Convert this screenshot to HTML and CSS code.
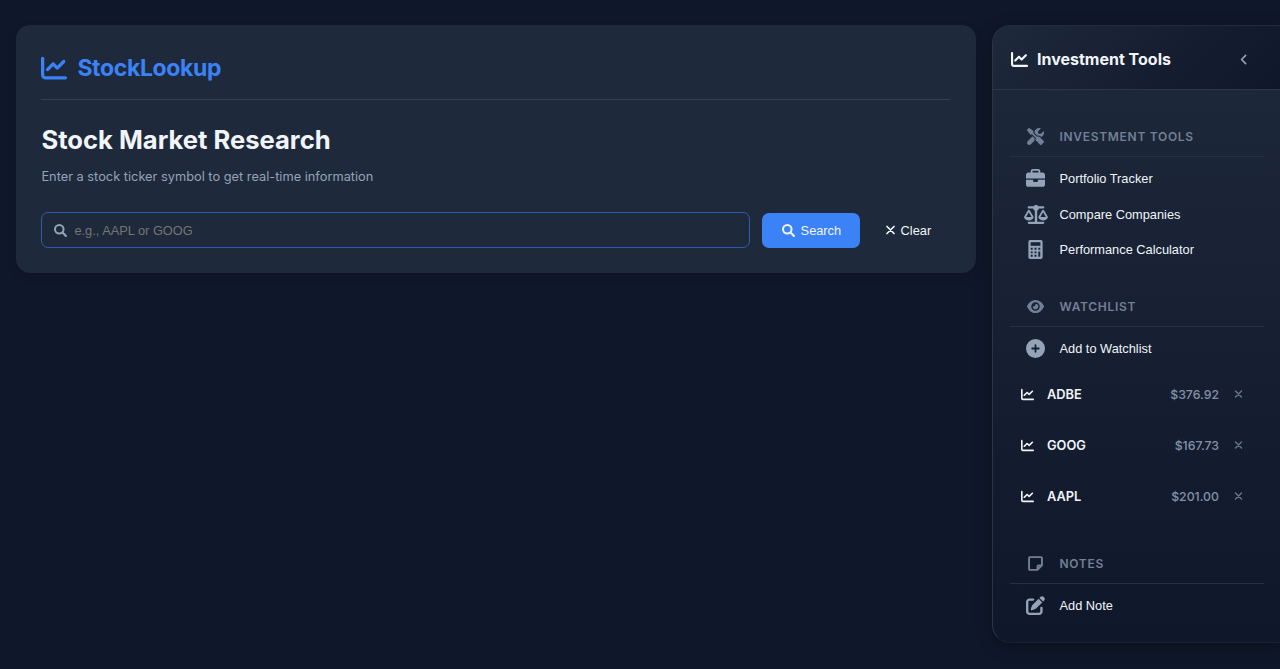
FILE: index.html
```html
<!DOCTYPE html>
<html lang="en">
<head>
<meta charset="utf-8">
<title>StockLookup</title>
<link rel="stylesheet" href="styles.css">
</head>
<body>
<svg class="sprite" aria-hidden="true">
  <symbol id="chart" viewBox="0 0 512 512"><path d="M64 64c0-17.7-14.3-32-32-32S0 46.3 0 64V400c0 44.2 35.8 80 80 80H480c17.7 0 32-14.3 32-32s-14.3-32-32-32H80c-8.8 0-16-7.2-16-16V64zm406.6 86.6c12.5-12.5 12.5-32.8 0-45.3s-32.8-12.5-45.3 0L320 210.7l-57.4-57.4c-12.5-12.5-32.8-12.5-45.3 0l-112 112c-12.5 12.5-12.5 32.8 0 45.3s32.8 12.5 45.3 0L240 221.3l57.4 57.4c12.5 12.5 32.8 12.5 45.3 0l128-128z"/></symbol>
  <symbol id="search" viewBox="0 0 512 512"><circle cx="208" cy="208" r="168" fill="none" stroke="currentColor" stroke-width="80"/><path d="M338 338 468 468" fill="none" stroke="currentColor" stroke-width="84" stroke-linecap="round"/></symbol>
  <symbol id="x" viewBox="0 0 384 512"><path d="M64 128 320 384M320 128 64 384" fill="none" stroke="currentColor" stroke-width="64" stroke-linecap="round"/></symbol>
  <symbol id="left" viewBox="0 0 320 512"><path d="M224 96 64 256 224 416" fill="none" stroke="currentColor" stroke-width="64" stroke-linecap="round" stroke-linejoin="round"/></symbol>
  <symbol id="tools" viewBox="0 0 512 512"><path d="M78.6 5C69.1-2.4 55.6-1.5 47 7L7 47c-8.5 8.5-9.4 22-2.1 31.6l80 104c4.5 5.9 11.6 9.4 19 9.4h54.1l109 109c-14.7 29-10 65.4 14.3 89.6l112 112c12.5 12.5 32.8 12.5 45.3 0l64-64c12.5-12.5 12.5-32.8 0-45.3l-112-112c-24.2-24.2-60.6-29-89.6-14.3l-109-109V104c0-7.5-3.5-14.5-9.4-19L78.6 5zM19.9 396.1C7.2 408.8 0 426.1 0 444.1C0 481.6 30.4 512 67.9 512c18 0 35.3-7.2 48-19.9L233.7 374.3c-7.8-20.9-9-43.6-3.6-65.1l-61.7-61.7L19.9 396.1zM512 144c0-10.5-1.1-20.7-3.2-30.5c-2.4-11.2-16.1-14.1-24.2-6l-63.9 63.9c-3 3-7.1 4.7-11.3 4.7H352c-8.8 0-16-7.2-16-16V102.6c0-4.2 1.7-8.3 4.7-11.3l63.9-63.9c8.1-8.1 5.2-21.8-6-24.2C388.7 1.1 378.5 0 368 0C288.5 0 224 64.5 224 144l0 .8 85.3 85.3c36-9.1 75.8 .5 104 28.7L429 274.5c49-23 83-72.8 83-130.5z"/></symbol>
  <symbol id="briefcase" viewBox="0 0 512 512"><path d="M184 48H328c4.4 0 8 3.6 8 8V96H176V56c0-4.4 3.6-8 8-8zm-56 8V96H64C28.7 96 0 124.7 0 160v96H512V160c0-35.3-28.7-64-64-64H384V56c0-30.9-25.1-56-56-56H184c-30.9 0-56 25.1-56 56zM512 288H320v32c0 17.7-14.3 32-32 32H224c-17.7 0-32-14.3-32-32V288H0V416c0 35.3 28.7 64 64 64H448c35.3 0 64-28.7 64-64V288z"/></symbol>
  <symbol id="scale" viewBox="0 0 640 512"><path d="M384 32H512c17.7 0 32 14.3 32 32s-14.3 32-32 32H398.4c-5.2 25.8-22.9 47.1-46.4 57.3V448H512c17.7 0 32 14.3 32 32s-14.3 32-32 32H128c-17.7 0-32-14.3-32-32s14.3-32 32-32H288V153.3c-23.5-10.3-41.2-31.6-46.4-57.3H128c-17.7 0-32-14.3-32-32s14.3-32 32-32H256c14.6-19.4 37.8-32 64-32s49.4 12.6 64 32zm55.6 288H584.4L512 195.8 439.6 320zM512 416c-62.9 0-115.2-34-126-78.9c-2.6-11 1-22.3 6.7-32.1l95.2-163.2c5-8.6 14.2-13.8 24.1-13.8s19.1 5.3 24.1 13.8l95.2 163.2c5.7 9.8 9.3 21.1 6.7 32.1C627.2 382 574.9 416 512 416zM126.8 195.8L54.4 320H199.3L126.8 195.8zM.9 337.1c-2.6-11 1-22.3 6.7-32.1l95.2-163.2c5-8.6 14.2-13.8 24.1-13.8s19.1 5.3 24.1 13.8l95.2 163.2c5.7 9.8 9.3 21.1 6.7 32.1C242 382 189.7 416 126.8 416S11.7 382 .9 337.1z"/></symbol>
  <symbol id="calc" viewBox="0 0 384 512"><path fill-rule="evenodd" d="M48 0H336a48 48 0 0 1 48 48V464a48 48 0 0 1-48 48H48a48 48 0 0 1-48-48V48A48 48 0 0 1 48 0zM60 62V154H324V62zM64 212V264H116V212zM166 212V264H218V212zM268 212V264H320V212zM64 308V360H116V308zM166 308V360H218V308zM268 308V452H320V308zM64 400V452H116V400zM166 400V452H218V400z"/></symbol>
  <symbol id="eye" viewBox="0 0 576 512"><path d="M288 32c-80.8 0-145.5 36.8-192.6 80.6C48.6 156 17.3 208 2.5 243.7c-3.3 7.9-3.3 16.7 0 24.6C17.3 304 48.6 356 95.4 399.4C142.5 443.2 207.2 480 288 480s145.5-36.8 192.6-80.6c46.8-43.5 78.1-95.4 93-131.1c3.3-7.9 3.3-16.7 0-24.6c-14.9-35.7-46.2-87.7-93-131.1C433.5 68.8 368.8 32 288 32zM144 256a144 144 0 1 1 288 0 144 144 0 1 1 -288 0zm144-64c0 35.3-28.7 64-64 64c-7.1 0-13.9-1.2-20.3-3.3c-5.5-1.8-11.9 1.6-11.7 7.4c.3 6.9 1.3 13.8 3.2 20.7c13.7 51.2 66.4 81.6 117.6 67.9s81.6-66.4 67.9-117.6c-11.1-41.5-47.8-69.4-88.6-71.1c-5.8-.2-9.2 6.1-7.4 11.7c2.1 6.4 3.3 13.2 3.3 20.3z"/></symbol>
  <symbol id="plus" viewBox="0 0 512 512"><path fill-rule="evenodd" d="M256 512A256 256 0 1 0 256 0a256 256 0 1 0 0 512zM232 344V280H168a24 24 0 0 1 0-48h64V168a24 24 0 0 1 48 0v64h64a24 24 0 0 1 0 48H280v64a24 24 0 0 1-48 0z"/></symbol>
  <symbol id="note" viewBox="0 0 448 512"><path d="M60 64H388a30 30 0 0 1 30 30V314L282 448H60a30 30 0 0 1-30-30V94a30 30 0 0 1 30-30zM286 440V338a24 24 0 0 1 24-24H414" fill="none" stroke="currentColor" stroke-width="58" stroke-linejoin="round"/></symbol>
  <symbol id="edit" viewBox="0 0 512 512"><path d="M471.6 21.7c-21.9-21.9-57.3-21.9-79.2 0L362.3 51.7l97.9 97.9 30.1-30.1c21.9-21.9 21.9-57.3 0-79.2L471.6 21.7zm-299.2 220c-6.1 6.1-10.8 13.6-13.5 21.9l-29.6 88.8c-2.9 8.6-.6 18.1 5.8 24.6s15.9 8.7 24.6 5.8l88.8-29.6c8.2-2.7 15.7-7.4 21.9-13.5L437.7 172.3 339.7 74.3 172.4 241.7zM96 64C43 64 0 107 0 160V416c0 53 43 96 96 96H352c53 0 96-43 96-96V320c0-17.7-14.3-32-32-32s-32 14.3-32 32v96c0 17.7-14.3 32-32 32H96c-17.7 0-32-14.3-32-32V160c0-17.7 14.3-32 32-32h96c17.7 0 32-14.3 32-32s-14.3-32-32-32H96z"/></symbol>
</svg>
<div class="layout">
  <main class="card">
    <header class="brand"><svg><use href="#chart"/></svg><span>StockLookup</span></header>
    <h1>Stock Market Research</h1>
    <p class="lead">Enter a stock ticker symbol to get real-time information</p>
    <form class="search-row">
      <label class="field"><svg><use href="#search"/></svg><input type="text" placeholder="e.g., AAPL or GOOG"></label>
      <button type="button" class="btn primary"><svg><use href="#search"/></svg>Search</button>
      <button type="button" class="btn clear"><svg><use href="#x"/></svg>Clear</button>
    </form>
  </main>
  <aside class="sidebar">
    <header class="side-head"><svg><use href="#chart"/></svg><h2>Investment Tools</h2><svg class="chevron"><use href="#left"/></svg></header>
    <nav class="side-body">
      <section class="group">
        <h3><span class="ico"><svg><use href="#tools"/></svg></span>INVESTMENT TOOLS</h3>
        <button class="item"><span class="ico"><svg><use href="#briefcase"/></svg></span>Portfolio Tracker</button>
        <button class="item"><span class="ico"><svg class="wide"><use href="#scale"/></svg></span>Compare Companies</button>
        <button class="item"><span class="ico"><svg><use href="#calc"/></svg></span>Performance Calculator</button>
      </section>
      <section class="group watch">
        <h3><span class="ico"><svg><use href="#eye"/></svg></span>WATCHLIST</h3>
        <button class="item"><span class="ico"><svg><use href="#plus"/></svg></span>Add to Watchlist</button>
        <ul class="stocks">
          <li><svg class="line"><use href="#chart"/></svg><b>ADBE</b><span class="price">$376.92</span><svg class="remove"><use href="#x"/></svg></li>
          <li><svg class="line"><use href="#chart"/></svg><b>GOOG</b><span class="price">$167.73</span><svg class="remove"><use href="#x"/></svg></li>
          <li><svg class="line"><use href="#chart"/></svg><b>AAPL</b><span class="price">$201.00</span><svg class="remove"><use href="#x"/></svg></li>
        </ul>
      </section>
      <section class="group">
        <h3><span class="ico"><svg><use href="#note"/></svg></span>NOTES</h3>
        <button class="item"><span class="ico"><svg><use href="#edit"/></svg></span>Add Note</button>
      </section>
    </nav>
  </aside>
</div>
</body>
</html>
```
FILE: styles.css
```css
* { box-sizing: border-box; }
body { margin: 0; height: 669px; overflow: hidden; background: #0f172a; color: #f1f5f9; font-family: Inter, sans-serif; }
svg { fill: currentColor; flex: none; }
.sprite { display: none; }
button, input { font-family: "Liberation Sans", Arial, sans-serif; font-size: 12.8px; }
button { border: 0; background: none; color: #f1f5f9; }
.layout { display: flex; align-items: flex-start; gap: 16px; padding: 25px 0 0 16px; }

.card { width: 960px; height: 248px; flex: none; padding: 25px 26px 25px 25.4px; background: #1e293b; border-radius: 14px; box-shadow: 0 4px 8px rgba(0, 0, 0, .12); }
.brand { display: flex; align-items: center; gap: 10px; height: 50px; padding-bottom: 14px; border-bottom: 1px solid #334155; color: #3b82f6; font-size: 23px; font-weight: 700; letter-spacing: -.35px; }
.brand svg { width: 26px; height: 26px; }
h1 { margin: 24px 0 0; font-size: 25.6px; line-height: 32px; font-weight: 700; }
.lead { margin: 12px 0 0; color: #94a3b8; font-size: 12.8px; line-height: 18px; }
.search-row { display: flex; margin: 26px 0 0; height: 36px; align-items: center; }
.field { display: flex; align-items: center; gap: 7px; width: 708.6px; flex: none; height: 36px; padding-left: 12px; border: 1px solid #2c5dae; border-radius: 7px; color: #94a3b8; }
.field svg { width: 13px; height: 13px; }
.field input { flex: 1; min-width: 0; padding: 0; border: 0; outline: 0; background: none; color: #f1f5f9; }
.field input::placeholder { color: #757575; opacity: 1; }
.btn { display: flex; align-items: center; justify-content: center; height: 35px; padding: 0; gap: 6px; flex: none; }
.primary { width: 98px; margin-left: 12.4px; border-radius: 7px; background: #3b82f6; }
.primary svg { width: 13px; height: 13px; }
.clear { width: 95px; gap: 5px; }
.clear svg { width: 11px; height: 14px; }

.sidebar { width: 288px; height: 618px; flex: none; border: 1px solid #273449; border-color: #202c40 #273449 #172136; border-right: 0; border-radius: 18px 0 0 18px; background: linear-gradient(#1e293b, #0f172a); box-shadow: 0 4px 16px rgba(0, 0, 0, .35); }
.side-head { display: flex; align-items: center; height: 64px; padding: 4px 31px 0 18px; border-bottom: 1px solid #2b384c; border-radius: 17px 0 0 0; background: linear-gradient(135deg, #1e293b, #0f172a); }
.side-head svg { width: 17px; height: 17px; }
.side-head h2 { flex: 1; margin: 0 0 1px 9px; font-size: 16px; line-height: 20px; font-weight: 700; }
.side-head .chevron { width: 10px; height: 13px; color: #94a3b8; }
.side-body { padding: 28px 16px 0 17px; }
.group { margin-bottom: 21px; }
.watch { margin-bottom: 23px; }
.group h3 { display: flex; align-items: center; height: 39px; padding-bottom: 1px; margin: 0 0 4px; border-bottom: 1px solid #243046; color: #718096; font-size: 12px; font-weight: 600; letter-spacing: .7px; }
.ico { display: flex; justify-content: center; width: 49.5px; padding-left: 1.5px; flex: none; }
.ico svg { width: 17px; height: 17px; }
.item { display: flex; align-items: center; width: 100%; height: 35.4px; padding: 0; text-align: left; }
.item .ico { color: #94a3b8; }
.item .ico svg { width: 19px; height: 19px; }
.item .ico .wide { width: 24px; }
.stocks { list-style: none; margin: 2px 0 0; padding: 0; }
.stocks li { display: flex; align-items: center; height: 51px; padding: 0 21px 0 11px; font-size: 12.8px; }
.stocks .line { width: 13px; height: 13px; margin-right: 13px; }
.stocks b { flex: 1; font-weight: 600; }
.price { color: #8391a8; font-size: 12.3px; font-weight: 500; }
.stocks .remove { width: 9px; height: 12px; margin-left: 15px; color: #64748b; }
```
